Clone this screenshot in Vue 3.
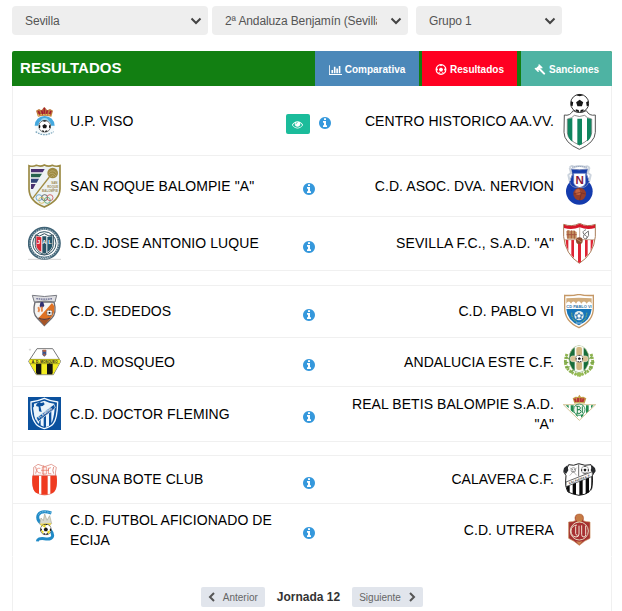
<template>
  <div class="page">
    <svg class="defs" aria-hidden="true">
      <symbol id="info" viewBox="128 128 1536 1536">
        <path d="M1152 1376v-160q0-14-9-23t-23-9h-96v-512q0-14-9-23t-23-9h-320q-14 0-23 9t-9 23v160q0 14 9 23t23 9h96v320h-96q-14 0-23 9t-9 23v160q0 14 9 23t23 9h448q14 0 23-9t9-23zm-128-896v-160q0-14-9-23t-23-9h-192q-14 0-23 9t-9 23v160q0 14 9 23t23 9h192q14 0 23-9t9-23zm640 416q0 209-103 385.5t-279.5 279.5-385.5 103-385.5-103-279.5-279.5-103-385.5 103-385.5 279.5-279.5 385.5-103 385.5 103 279.5 279.5 103 385.5z" />
      </symbol>
      <symbol id="eye" viewBox="0 0 1792 1792">
        <path d="M1664 960q-152-236-381-353 61 104 61 225 0 185-131.5 316.5t-316.5 131.5-316.5-131.5-131.5-316.5q0-121 61-225-229 117-381 353 133 205 333.5 326.5t434.5 121.5 434.5-121.5 333.5-326.5zm-720-384q0-20-14-34t-34-14q-125 0-214.5 89.5t-89.5 214.5q0 20 14 34t34 14 34-14 14-34q0-86 61-147t147-61q20 0 34-14t14-34zm848 384q0 34-20 69-140 230-376.5 368.5t-499.5 138.5-499.5-139-376.5-368q-20-35-20-69t20-69q140-229 376.5-368t499.5-139 499.5 139 376.5 368q20 35 20 69z" />
      </symbol>
      <symbol id="chart" viewBox="0 128 2048 1536">
        <path d="M640 896v512h-256v-512h256zm384-512v1024h-256v-1024h256zm1024 1152v128h-2048v-1536h128v1408h1920zm-640-896v768h-256v-768h256zm384-384v1152h-256v-1152h256z" />
      </symbol>
      <symbol id="futbol" viewBox="0 0 24 24">
        <circle cx="12" cy="12" r="10.7" fill="none" stroke="currentColor" stroke-width="2.4" />
        <path d="M12 7.5l4.6 3.4-1.8 5.3H9.2l-1.8-5.3zM8 1.5h8L12 5zM1.5 8l4 3-2 5L1 13zM22.5 8l-4 3 2 5 2.5-3zM5.5 18.5l4-.5 1.5 4zM18.5 18.5l-4-.5-1.5 4z" />
      </symbol>
      <symbol id="gavel" viewBox="0 0 24 24">
        <g fill="none" stroke="currentColor">
          <path d="M5 12.500L12.500 5" stroke-width="7" />
          <path d="M10 2l6 6M2 10l6 6" stroke-width="3" stroke-linecap="round" />
          <path d="M10 10l11 11" stroke-width="4.500" stroke-linecap="round" />
        </g>
      </symbol>
      <symbol id="ball" viewBox="0 0 60 60">
        <circle cx="30" cy="30" r="28" fill="#fff" stroke="#333" stroke-width="3" />
        <path d="M30 19l11 8-4 12H23l-4-12zM19 5l11 3 11-3-11-4zM3 23l7 4-2 12-6-2zM57 23l-7 4 2 12 6-2zM18 48l9 3 1 7-10-4zM42 48l-9 3-1 7 10-4z" fill="#171717" />
      </symbol>

      <symbol id="viso" viewBox="0 0 99 99">
        <circle cx="50" cy="62" r="30" fill="#f4fafc" />
        <path d="M20 62a30 29 0 0 1 60 0h-11a19 19 0 0 0-38 0z" fill="#45a9df" />
        <circle cx="50" cy="51" r="12" fill="#9bd5ec" />
        <use href="#ball" x="31" y="45" width="38" height="38" />
        <path d="M23 80q27 18 54 0" fill="none" stroke="#80a9bf" stroke-width="4" stroke-dasharray="5 3" />
        <path d="M30 35L24 17l9-5 7 4 9-10 9 10 8-4 9 5-5 18q-20-5-40 0z" fill="#bd783b" />
        <path d="M31 18l5 11m5-13l3 12m14-12l-3 12m14-10l-5 11M49 8v20" stroke="#a41d31" stroke-width="5" />
        <path d="M29 31q21-5 42 0" fill="none" stroke="#e2bd5c" stroke-width="4" stroke-dasharray="5 3" />
      </symbol>
      <symbol id="sanroque" viewBox="0 0 99 132">
        <path d="M3 5q12 4 22-1 13 5 24-1 13 6 24 1 10 5 23 1v70q-1 34-47 54Q4 113 3 75z" fill="#edf2f3" stroke="#9b8a44" stroke-width="5" />
        <path d="M9 12h39L9 81z" fill="#f4f4f4" />
        <path d="M9 15h41l-6 10H9zM9 60h14l-8 15H9z" fill="#493171" />
        <path d="M9 29h33l-7 11H9z" fill="#25624c" />
        <path d="M9 44h24l-7 12H9z" fill="#314579" />
        <path d="M64 39L14 103" stroke="#a18c43" stroke-width="4" />
        <circle cx="74" cy="27" r="16" fill="#9e8b43" />
        <path d="M62 27q12-14 24 1M62 33q11-12 22 3M68 40q6-11 11 0" fill="none" stroke="#c3b57c" stroke-width="2" />
        <g fill="#9d8b56" font-size="9" font-weight="bold" text-anchor="middle">
          <text x="79" y="59">SAN</text><text x="74" y="71">ROQUE</text><text x="66" y="83">BALOMPIE</text>
        </g>
        <g fill="none" stroke-width="2.5">
          <circle cx="33" cy="101" r="9" stroke="#5a9cc5" /><circle cx="50" cy="101" r="9" stroke="#555" /><circle cx="66" cy="101" r="9" stroke="#d0575a" />
          <circle cx="41" cy="109" r="9" stroke="#d7bb4f" /><circle cx="58" cy="109" r="9" stroke="#58a476" />
        </g>
      </symbol>
      <symbol id="luque" viewBox="0 0 99 105">
        <path d="M0 100h99" stroke="#d5d5d5" stroke-width="3" />
        <circle cx="49" cy="52" r="45" fill="#fff" stroke="#416477" stroke-width="9" />
        <circle cx="49" cy="52" r="43" fill="none" stroke="#9bb2bc" stroke-width="4" stroke-dasharray="4 3" />
        <circle cx="49" cy="52" r="35" fill="#f5f7f7" stroke="#315465" stroke-width="3" />
        <path d="M22 27l13 3 14-7 14 7 13-3v31q-2 18-27 28-26-10-27-28z" fill="#fff" stroke="#35505d" stroke-width="3" />
        <path d="M25 31l15 3v43q-15-7-15-21z" fill="#d92936" /><path d="M58 33l15-3v26q-1 15-15 22z" fill="#23566b" />
        <path d="M43 31h12v49l-6 3-6-3z" fill="#275264" />
        <g font-size="17" font-weight="bold" fill="#fff" text-anchor="middle"><text x="32" y="55">J</text><text x="49" y="55">A</text><text x="66" y="55">L</text></g>
        <path d="M31 94q18 8 36 0" fill="none" stroke="#e4eef1" stroke-width="3" stroke-dasharray="4 3" />
      </symbol>
      <symbol id="sededos" viewBox="0 0 99 105">
        <path d="M21 24q-9 34 7 49l21 22 22-22q16-16 7-49z" fill="#f5f4f2" stroke="#6c6c72" stroke-width="4" />
        <path d="M72 27L31 73q9 10 18 16 33-17 30-52z" fill="#df7224" />
        <path d="M13 4q36 7 73 0l-5 20q-31-6-62 0z" fill="#dfdfe3" stroke="#777980" stroke-width="3" />
        <path d="M25 14q24 3 49 0" fill="none" stroke="#686c92" stroke-width="4" stroke-dasharray="5 2" />
        <path d="M37 26q4-5 9-1l3 10-8 9-6-8z" fill="#303072" />
        <path d="M31 39q4 8 0 15m10-16l1 15" stroke="#e78b51" stroke-width="6" fill="none" />
        <use href="#ball" x="55" y="47" width="19" height="19" />
        <path d="M31 73q18 9 36 0l-18 22z" fill="#a65426" /><path d="M31 72q18 8 36 0" fill="none" stroke="#553d43" stroke-width="4" />
      </symbol>
      <symbol id="mosqueo" viewBox="0 0 99 84">
        <path d="M27 2h47l24 38-22 40H25L2 40z" fill="#fff" stroke="#77787a" stroke-width="3" />
        <path d="M6 33h88l3 8-21 38H25L3 41z" fill="#f2ec20" />
        <path d="M24 47h16v32H27l-3-5zM57 47h17v28l-2 4H57z" fill="#101010" />
        <path d="M43 6h12v14l-6 6-6-6z" fill="#39538b" /><path d="M44 5h10v6H44zM46 17h6v6h-6z" fill="#b36142" />
        <path d="M5 34h89M6 47h87" stroke="#595b20" stroke-width="1.500" />
        <text x="50" y="44.500" font-size="10" font-weight="bold" text-anchor="middle" textLength="77" fill="#222">A. D. MOSQUEO</text>
        <circle cx="6" cy="5" r="2" fill="none" stroke="#999" />
      </symbol>
      <symbol id="fleming" viewBox="0 0 99 102">
        <path d="M0 0h99v99H0z" fill="#0b519e" />
        <path d="M9 15q24-4 40-11 17 8 40 11-1 50-13 65-8 10-27 15-22-6-29-20Q8 58 9 15z" fill="#0b519e" stroke="#f4faff" stroke-width="4" />
        <path d="M15 30l23 11-5 40q-14-11-18-51zM38 62l9-5v32l-9-4zM54 54l9-6v38l-9 4zM70 43l10-7q-3 31-10 43z" fill="#eef7ff" />
        <path d="M18 20q16-5 31-9 15 7 30 9l-3 9-54 39q-6-19-4-48z" fill="#eaf4fa" />
        <path d="M26 20l8-5 6 3 7-2 3 6-6 5-7 1 4 17-8-2-1-14-8-2z" fill="#0b519e" />
        <path d="M25 62L78 22l4 11-52 41z" fill="#0b519e" stroke="#fff" stroke-width="2" />
        <text transform="translate(33 66) rotate(-37)" font-size="11" font-weight="bold" fill="#fff">FLEMING</text>
      </symbol>
      <symbol id="osuna" viewBox="0 0 99 99">
        <path d="M17 13L30 4l20 7 20-7 15 9-3 17q9 45-5 57-11 9-27 9t-27-9Q9 75 17 30z" fill="#fff" stroke="#d77265" stroke-width="2" />
        <path d="M13 38h20v54Q9 90 13 38zM40 38h19v57H40zM67 38h19q5 50-19 54z" fill="#ef3b20" />
        <path d="M14 37h71M23 12q5 10 0 20M77 12q-5 10 0 20" fill="none" stroke="#ce574a" stroke-width="2" />
        <path d="M37 16q-12-2-10 7t12 7M43 12h12v21H43zM61 14v18h9M47 7v30M39 22h24M69 14q-7-2-9 9" fill="none" stroke="#e57563" stroke-width="2" />
      </symbol>
      <symbol id="ecija" viewBox="0 0 99 120">
        <path d="M70 9Q40-1 31 14q-7 16 13 30 28 14 30 32 0 14-25 10-20-2-21 8" fill="none" stroke="#218bc7" stroke-width="9" />
        <path d="M70 9Q40-1 31 14" fill="none" stroke="#82c6e9" stroke-width="3" stroke-dasharray="5 3" />
        <path d="M35 42l4-18 7 8 4-20 7 19 8-14 6 24q-14 11-36 1z" fill="#d8d8cc" stroke="#aaa995" stroke-width="2" />
        <path d="M36 41l34-2-5 11H41z" fill="#edd74c" />
        <use href="#ball" x="36" y="41" width="35" height="35" />
        <path d="M42 48l9 5 3-10zM56 66l11-6-4 12zM38 60l9 4-2 8z" fill="#ead91f" />
      </symbol>

      <symbol id="centro" viewBox="0 0 99 171">
        <path d="M4 66q17 4 26-13 20 11 40 0 9 17 27 13v52q-1 31-48 51Q3 149 3 118z" fill="#fff" stroke="#555" stroke-width="3" />
        <path d="M13 78q15-2 21-11 15 7 31 0 7 9 21 11v42q-2 20-37 36-34-14-36-36z" fill="#fff" stroke="#555" stroke-width="2" />
        <path d="M14 79l14-4v71q-13-9-14-27zM43 77h14v77l-8 3-6-3zM72 75l13 4v40q0 17-13 26z" fill="#10855f" />
        <use href="#ball" x="21" y="2" width="58" height="58" />
      </symbol>
      <symbol id="nervion" viewBox="0 0 99 126">
        <circle cx="49" cy="79" r="40" fill="#143bad" />
        <path d="M24 12q25 5 50 0l-3 17 8 20q-8 17-16 18H36q-15-4-16-18l8-20z" fill="#163dab" stroke="#7485b8" stroke-width="3" />
        <path d="M20 8q6-9 13-2 17-6 33 0 10-5 13 3l-4 14 8 7-4 18M20 8l4 15-8 7 4 18" fill="none" stroke="#ccd4de" stroke-width="6" />
        <path d="M27 7q22-5 45 0" fill="none" stroke="#8f9db8" stroke-width="3" stroke-dasharray="4 2" />
        <path d="M32 25h36v29q-3 11-18 14-16-4-18-14z" fill="#fff" stroke="#5670bd" stroke-width="2" />
        <text x="50" y="57" font-size="35" font-weight="bold" text-anchor="middle" fill="#8c1739">N</text>
        <circle cx="50" cy="87" r="19" fill="#983f29" /><circle cx="46" cy="81" r="9" fill="#c6643e" />
        <path d="M32 87q18-9 36 0M50 68q9 19 0 38" fill="none" stroke="#602521" stroke-width="1.500" />
      </symbol>
      <symbol id="sevilla" viewBox="0 0 99 123">
        <path d="M2 4q25 9 48-3 22 12 47 3v37Q92 94 49 121 7 94 2 41z" fill="#fff" stroke="#a97c58" stroke-width="3" />
        <path d="M3 5q25 9 47-3 22 12 46 3v10q-23 7-46-2-23 9-47 2z" fill="#d51929" />
        <path d="M8 51h8v32q-8-14-8-32zM25 51h8v54l-8-9zM45 58h9v58l-5 4-4-3zM66 51h8v44l-8 9zM83 51h8q-1 18-8 33z" fill="#de2434" />
        <path d="M10 25q7-7 14 0 7-6 17 2v20H12z" fill="#c49360" /><path d="M15 22v24m10-24v24m9-23v24M11 35h30" stroke="#a7553e" stroke-width="3" />
        <path d="M69 20q-14 5-6 14 15 8 6 14-11-1-6-13l13-11q5 15-7 25" fill="none" stroke="#777" stroke-width="3" />
        <path d="M50 12v34M4 50h90" stroke="#b08062" stroke-width="2" />
        <circle cx="49" cy="53" r="10" fill="#8b4d31" /><path d="M42 49l14 8" stroke="#c58b60" stroke-width="3" />
      </symbol>
      <symbol id="pablo" viewBox="0 0 99 105">
        <path d="M5 4q23 2 43-3 20 5 43 3v39Q91 81 48 101 5 82 5 42z" fill="#fff" stroke="#c59866" stroke-width="4" />
        <path d="M10 45h76Q83 79 48 94 13 80 10 45z" fill="#1675b9" />
        <path d="M10 13q37-4 76 0v16q-7-13-15 0-8-13-16 0-8-14-16 0-8-13-15 0-7-13-14 0z" fill="#d2ad7d" />
        <text x="48" y="43" font-size="12" font-weight="bold" text-anchor="middle" fill="#3577aa">CD PABLO VI</text>
        <circle cx="48" cy="65" r="14" fill="#e9f0ec" /><path d="M48 54l4 7 9 1-6 6 2 9-9-4-9 4 2-9-6-6 9-1z" fill="#377aaf" /><circle cx="48" cy="66" r="5" fill="#fff" />
        <path d="M26 56q0 20 15 27M71 56q0 20-15 27" fill="none" stroke="#77aa77" stroke-width="4" stroke-dasharray="3 2" />
        <path d="M39 87h18" stroke="#e5eef3" stroke-width="2" />
      </symbol>
      <symbol id="este" viewBox="0 0 99 102">
        <path d="M12 27q-18 49 34 63M84 27q18 49-34 63" fill="none" stroke="#90b450" stroke-width="9" stroke-dasharray="6 3" />
        <path d="M8 35l10 7M3 51l13 2M8 69l12-4M23 83l8-8M88 34l-9 7M94 51l-12 3M88 71l-10-6M70 83l-5-8" stroke="#78a548" stroke-width="4" />
        <ellipse cx="48" cy="42" rx="30" ry="40" fill="#186d3b" stroke="#b1bd87" stroke-width="2" />
        <path d="M35 6q13-8 27 0v72q-14 7-27 0z" fill="#f7faf3" />
        <rect x="40" y="6" width="17" height="27" rx="6" fill="#d2b781" /><rect x="40" y="49" width="17" height="26" rx="6" fill="#d2b781" />
        <rect x="22" y="33" width="53" height="17" rx="7" fill="#d8c193" stroke="#f2ead2" stroke-width="2" />
        <use href="#ball" x="37" y="29" width="24" height="24" />
        <path d="M36 88l12-7 13 7-12 8z" fill="#9abe58" />
      </symbol>
      <symbol id="betis" viewBox="0 0 99 120">
        <path d="M1 32h97L49 79z" fill="#fff" stroke="#bca763" stroke-width="2" />
        <path d="M8 34h9v9zM23 34h9v23l-9-8zM38 34h6v35l-6-6zM54 34h7v31l-7 6zM69 34h8v17l-8 7zM84 34h8l-8 9z" fill="#208b4d" />
        <circle cx="49" cy="47" r="17" fill="#f2f7f0" stroke="#35935a" stroke-width="3" />
        <path d="M43 36v22M40 37h9q7 5 0 10h-6 8q7 6 0 11H40M58 37v20" fill="none" stroke="#26854f" stroke-width="3" />
        <path d="M34 28L29 13l9-5 7 1 4-7 5 7 7-1 9 5-5 15z" fill="#c29b47" />
        <path d="M35 14l4 10m6-12v13m8-13v13m9-12l-4 12" stroke="#b83237" stroke-width="6" />
        <path d="M34 27q15-3 31 0" fill="none" stroke="#d3bd6c" stroke-width="3" />
      </symbol>
      <symbol id="calavera" viewBox="0 0 99 99">
        <path d="M17 5q15 5 30-3 19 8 37 3 1 12 12 19l-8 14q3 34-9 48-12 10-31 11-19-3-33-10Q5 72 9 38L2 26q13-8 15-21z" fill="#fff" stroke="#222" stroke-width="3" />
        <path d="M3 15l10-8 3 15-7 11-8-9zM96 15L87 7l-4 15 7 11 8-9z" fill="#272a2d" />
        <path d="M11 70l9-4v23l-7-5zM29 62l10-4v37l-10-3zM49 54l10-4v45l-10 1zM68 46l10-4v46l-10 5zM85 39l3-1v37l-3 8z" fill="#090909" />
        <path d="M9 57l79-31v14L9 71z" fill="#fff" stroke="#222" stroke-width="2" />
        <path d="M47 4v36" stroke="#222" stroke-width="2" />
        <path d="M21 14l20 23m0-23L20 38" stroke="#bbb" stroke-width="3" /><circle cx="31" cy="21" r="7" fill="#fff" stroke="#777" stroke-width="2" /><path d="M27 20h3m3 0h3M28 25h6" stroke="#444" stroke-width="2" />
        <use href="#ball" x="54" y="9" width="24" height="24" />
        <text transform="translate(19 64) rotate(-21)" font-size="9" font-weight="bold" fill="#333">CALAVERA C.F.</text>
      </symbol>
      <symbol id="utrera" viewBox="0 0 99 102">
        <path d="M17 27q13 0 20-4-5-20 12-20 16 0 12 20 7 4 20 4v49Q65 82 49 97 33 83 17 76z" fill="#a53232" stroke="#c58751" stroke-width="2" />
        <path d="M38 18q-1-14 11-14t11 14l-5 9H43z" fill="#c67c45" />
        <circle cx="49" cy="54" r="27" fill="#a73032" stroke="#e5d6be" stroke-width="3" />
        <path d="M42 36q-18 2-18 18t15 18q9 0 9-9V38M56 37v28q0 7 7 7 5 0 5-7V38M38 40v22q1 5 6 5" fill="none" stroke="#f1e3d2" stroke-width="3" />
        <path d="M39 84q10 5 20 0l-10 12z" fill="#ce8951" />
      </symbol>
    </svg>

    <div class="filters">
      <label v-for="f in filters" :key="f.value" class="filter" :class="f.size">
        <select>
          <option>{{ f.value }}</option>
        </select>
        <svg viewBox="0 0 12 8"><path d="M1.5 1.5L6 6l4.5-4.5" fill="none" stroke="#444" stroke-width="2" /></svg>
      </label>
    </div>

    <section class="panel">
      <header class="panel-head">
        <h1>RESULTADOS</h1>
        <nav class="tabs">
          <a class="tab comparativa"><svg><use href="#chart" /></svg>Comparativa</a>
          <a class="tab resultados"><svg><use href="#futbol" /></svg>Resultados</a>
          <a class="tab sanciones"><svg><use href="#gavel" /></svg>Sanciones</a>
        </nav>
      </header>

      <template v-for="m in partidos" :key="m.local">
        <div class="match" :class="m.size">
          <svg class="crest" :style="{ height: m.h1 + 'px' }"><use :href="'#' + m.escudo1" /></svg>
          <span class="team">{{ m.local }}</span>
          <div class="actions">
            <button v-if="m.directo" class="eye"><svg><use href="#eye" /></svg></button>
            <svg class="info"><use href="#info" /></svg>
          </div>
          <span class="team visitor">{{ m.visitante }}</span>
          <svg class="crest" :style="{ height: m.h2 + 'px' }"><use :href="'#' + m.escudo2" /></svg>
        </div>
        <div v-if="m.gap" class="gap" :style="{ height: m.gap + 'px' }"></div>
      </template>

      <footer class="pager">
        <button class="prev"><svg viewBox="0 0 8 10"><path d="M6 1L2 5l4 4" /></svg>Anterior</button>
        <strong>Jornada {{ jornada }}</strong>
        <button class="next">Siguiente<svg viewBox="0 0 8 10"><path d="M2 1l4 4-4 4" /></svg></button>
      </footer>
    </section>
  </div>
</template>

<script setup>
import { ref } from 'vue'

const jornada = ref(12)

const filters = [
  { value: 'Sevilla', size: 'wide' },
  { value: '2ª Andaluza Benjamín (Sevilla)', size: 'wide' },
  { value: 'Grupo 1', size: 'narrow' }
]

// h1 / h2: alto de cada escudo, gap: separador debajo del partido
const partidos = [
  { local: 'U.P. VISO', visitante: 'CENTRO HISTORICO AA.VV.', escudo1: 'viso', escudo2: 'centro', h1: 33, h2: 57, size: 'r70', directo: true },
  { local: 'SAN ROQUE BALOMPIE "A"', visitante: 'C.D. ASOC. DVA. NERVION', escudo1: 'sanroque', escudo2: 'nervion', h1: 44, h2: 42, size: 'r61' },
  { local: 'C.D. JOSE ANTONIO LUQUE', visitante: 'SEVILLA F.C., S.A.D. "A"', escudo1: 'luque', escudo2: 'sevilla', h1: 35, h2: 41, size: 'r54', gap: 15 },
  { local: 'C.D. SEDEDOS', visitante: 'C.D. PABLO VI', escudo1: 'sededos', escudo2: 'pablo', h1: 35, h2: 35, size: 'r52' },
  { local: 'A.D. MOSQUEO', visitante: 'ANDALUCIA ESTE C.F.', escudo1: 'mosqueo', escudo2: 'este', h1: 28, h2: 34, size: 'r49' },
  { local: 'C.D. DOCTOR FLEMING', visitante: 'REAL BETIS BALOMPIE S.A.D. "A"', escudo1: 'fleming', escudo2: 'betis', h1: 34, h2: 40, size: 'r55', gap: 14 },
  { local: 'OSUNA BOTE CLUB', visitante: 'CALAVERA C.F.', escudo1: 'osuna', escudo2: 'calavera', h1: 33, h2: 33, size: 'r48' },
  { local: 'C.D. FUTBOL AFICIONADO DE ECIJA', visitante: 'C.D. UTRERA', escudo1: 'ecija', escudo2: 'utrera', h1: 40, h2: 34, size: 'r53' }
]
</script>

<style>
body {
  background: #fff;
  overflow: hidden;
}
</style>

<style scoped>
.page {
  width: 622px;
  height: 611px;
  padding: 6px 10px 0 12px;
  box-sizing: border-box;
  font-family: 'Liberation Sans', Arial, sans-serif;
}
.defs {
  display: none;
}
.filters {
  display: flex;
  gap: 4px;
  margin-bottom: 16px;
}
.filter {
  display: grid;
  grid-template-columns: 1fr 31px;
  align-items: center;
  height: 29px;
  background: #eee;
  border-radius: 4px;
}
.filter.wide {
  width: 196px;
}
.filter.narrow {
  width: 146px;
  margin-left: 4px;
}
.filter select {
  appearance: none;
  width: 100%;
  height: 29px;
  padding: 0 0 0 13px;
  border: 0;
  background: none;
  font: 12px 'Liberation Sans', Arial, sans-serif;
  letter-spacing: -0.12px;
  color: #555;
  overflow: hidden;
}
.filter svg {
  width: 12px;
  height: 8px;
  margin-left: 13px;
}
.panel {
  width: 600px;
}
.panel-head {
  display: flex;
  justify-content: space-between;
  height: 35px;
  background: #127f12;
  border-radius: 2px 2px 0 0;
  overflow: hidden;
}
.panel-head h1 {
  margin: 0 0 0 8px;
  font-size: 15px;
  line-height: 34px;
  letter-spacing: 0.05px;
  color: #fff;
}
.tabs {
  display: flex;
}
.tab {
  display: flex;
  align-items: center;
  justify-content: center;
  gap: 3px;
  box-sizing: border-box;
  padding-top: 2px;
  font-size: 10px;
  font-weight: bold;
  color: #fff;
}
.tab svg {
  width: 12px;
  height: 11px;
  fill: #fff;
}
.comparativa {
  width: 104px;
  background: #4b88b9;
}
.comparativa svg {
  width: 13px;
  height: 10px;
}
.resultados {
  width: 95px;
  margin: 0 4px 0 3px;
  background: #ff0021;
}
.sanciones {
  width: 91px;
  background: #4eb3a3;
}
.match {
  display: grid;
  grid-template-columns: 33px 220px 56px 1fr 33px;
  align-items: center;
  padding: 0 15px;
}
.match,
.gap {
  box-sizing: border-box;
  border: 1px solid #f0f0f0;
  border-top: 0;
}
.match.r70 {
  height: 70px;
  padding-top: 1px;
}
.match.r61 { height: 61px; }
.match.r55 { height: 55px; }
.match.r54 { height: 54px; }
.match.r53 {
  height: 53px;
  border-bottom-color: transparent;
}
.match.r52 { height: 52px; }
.match.r49 { height: 49px; }
.match.r48 { height: 48px; }
.crest {
  display: block;
  width: 33px;
}
.team {
  padding-left: 9px;
  font-size: 14px;
  line-height: 20.5px;
  letter-spacing: 0.07px;
  color: #000;
}
.visitor {
  padding: 0 9px 0 0;
  text-align: right;
}
.actions {
  display: flex;
  align-items: center;
  justify-content: center;
  gap: 9px;
  padding-top: 6px;
}
.info {
  width: 12px;
  height: 12px;
  fill: #3598dc;
}
.eye {
  display: flex;
  align-items: center;
  justify-content: center;
  width: 24px;
  height: 20px;
  margin-left: -2px;
  padding: 0;
  border: 0;
  border-radius: 2px;
  background: #1bbc9b;
}
.eye svg {
  width: 11px;
  height: 11px;
  fill: #fff;
}
.eye + .info {
  margin-bottom: 3px;
}
.pager {
  display: flex;
  align-items: center;
  justify-content: center;
  gap: 12px;
  height: 54px;
  padding-top: 26px;
  box-sizing: border-box;
  border: solid #f0f0f0;
  border-width: 0 1px;
}
.pager button {
  display: flex;
  align-items: center;
  justify-content: space-between;
  height: 20px;
  padding: 0 7px;
  border: 0;
  border-radius: 2px;
  background: #e1e5ec;
  font: 10px 'Liberation Sans', Arial, sans-serif;
  color: #666;
}
.pager .prev {
  width: 64px;
}
.pager .next {
  width: 71px;
}
.pager svg {
  width: 8px;
  height: 10px;
  fill: none;
  stroke: #555;
  stroke-width: 2;
}
.pager strong {
  font-size: 12px;
  color: #333;
}
</style>
